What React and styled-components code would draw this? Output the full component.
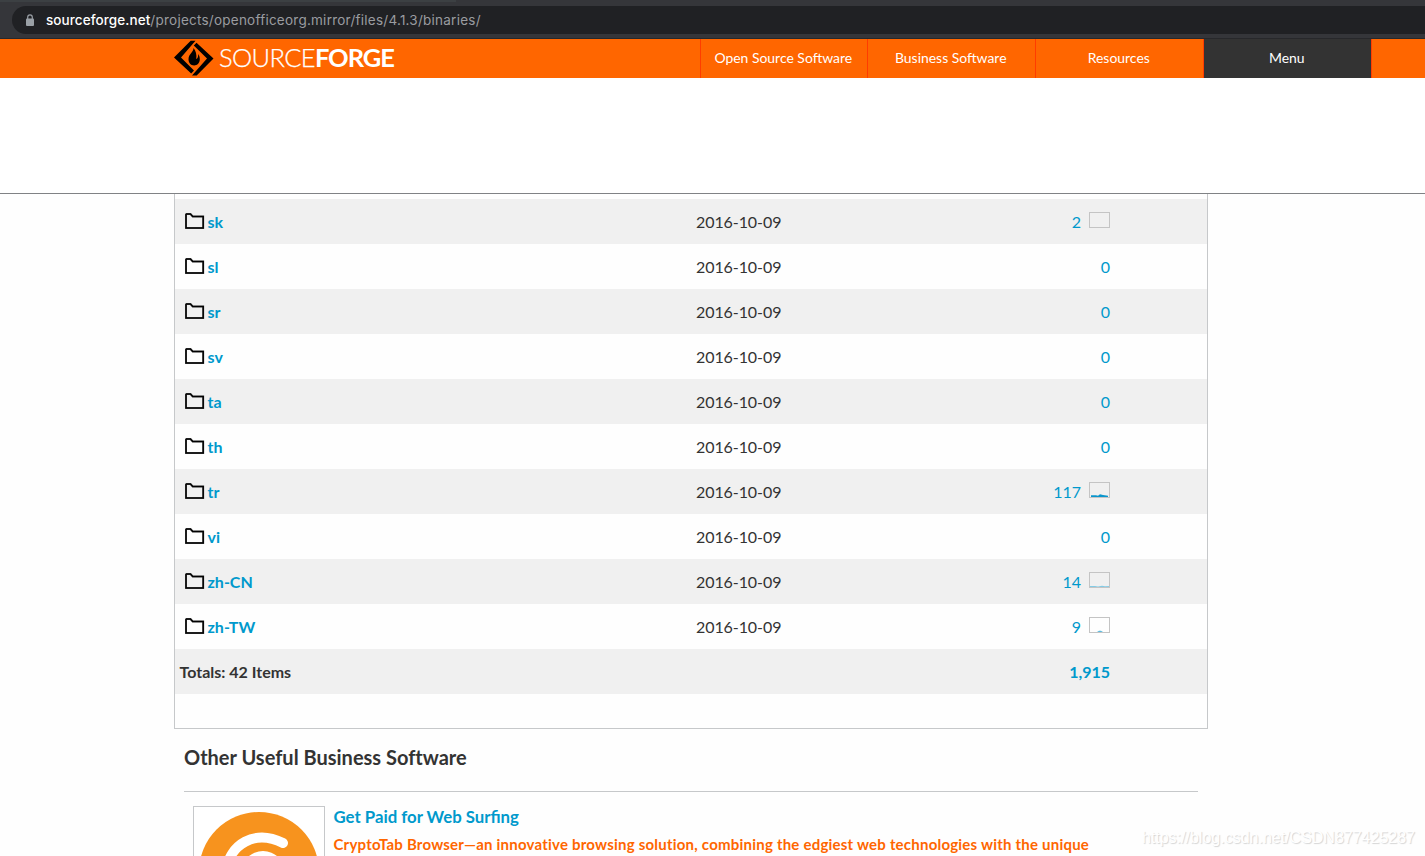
import React from "react";
import styled, { createGlobalStyle } from "styled-components";

const GlobalStyle = createGlobalStyle`
  * { box-sizing: border-box; }
  html, body { margin: 0; padding: 0; background: #fefefe; }
  body { font-family: Lato, sans-serif; color: #333; overflow: hidden; }
`;

const Page = styled.div`
  width: 1425px;
  height: 856px;
  overflow: hidden;
  position: relative;
`;

const BrowserBar = styled.div`
  height: 39px;
  background: #35363a;
  border-bottom: 1px solid #27282b;
  padding: 0 0 0 12px;
`;

const TabEdge = styled.div`
  height: 2px;
  width: 456px;
  margin: 0 0 4px -12px;
  background: #3c4043;
`;

const AddressField = styled.div`
  height: 28px;
  background: #202124;
  border-radius: 14px 0 0 14px;
  display: flex;
  align-items: center;
  padding-left: 13px;
  font: 13.5px/28px Inter, sans-serif;
  color: #9a9ca0;
  white-space: nowrap;
  svg { margin-right: 11px; }
`;

const Host = styled.span`
  color: #fff;
  font-weight: 500;
  letter-spacing: 0.08px;
`;

const UrlPath = styled.span`
  letter-spacing: 0.24px;
`;

const SiteHeader = styled.header`
  height: 39px;
  background: #f60;
  display: flex;
  padding-left: 174px;
`;

const Brand = styled.div`
  display: flex;
  width: 526px;
  align-items: center;
  padding-bottom: 2px;
  color: #fff;
  font-size: 25.5px;
  line-height: 39px;
  svg { flex: none; margin: 2px 5px 0 0; }
`;

const BrandLight = styled.span`
  font-weight: 300;
  letter-spacing: -0.65px;
  -webkit-text-stroke: 0.25px #fff;
`;

const BrandBold = styled.span`
  font-weight: 700;
  letter-spacing: -1.05px;
`;

const Nav = styled.nav`
  display: flex;
`;

const NavItem = styled.div`
  width: ${(p) => p.$width}px;
  padding-right: 1.5px;
  border-left: 1px solid #ff3c00;
  background: ${(p) => (p.$dark ? "#333" : "transparent")};
  color: #fff;
  font-size: 13.95px;
  line-height: 38px;
  text-align: center;
  white-space: nowrap;
`;

const NavEnd = styled.div`
  border-left: 1px solid #ff3c00;
`;

const AdSpace = styled.div`
  height: 116px;
  background: #fff;
  border-bottom: 1px solid #808285;
`;

const FileTable = styled.section`
  width: 1034px;
  height: 535px;
  margin-left: 174px;
  border: 1px solid #c6c8ca;
  border-top: 0;
  padding-top: 5px;
`;

const Row = styled.div`
  display: grid;
  grid-template-columns: 521px 314px 100px;
  height: 45px;
  line-height: 46px;
  font-size: 16px;
  background: ${(p) => (p.$shaded ? "#f0f0f0" : "#fefefe")};
`;

const Folder = styled.div`
  display: flex;
  padding-left: 10px;
  color: #09c;
  font-weight: 700;
  line-height: 45px;
  svg { flex: none; margin: 14px 2.5px 0 0; }
`;

const DateCell = styled.span`
  letter-spacing: -0.08px;
`;

const Downloads = styled.div`
  display: flex;
  justify-content: flex-end;
  color: #09c;
  font-weight: ${(p) => (p.$bold ? 700 : 400)};
`;

const SparkFrame = styled.span`
  width: 21px;
  height: 16px;
  border: 1px solid #c4c4c4;
  margin: 13px 0 0 8px;
  display: flex;
  svg { display: block; }
`;

const Totals = styled.div`
  grid-column: 1 / 3;
  padding-left: 4.5px;
  font-weight: 700;
`;

const Related = styled.section`
  width: 1014px;
  margin-left: 184px;
`;

const Heading = styled.h2`
  height: 63px;
  margin: 0;
  border-bottom: 1px solid #c6c8ca;
  font-size: 20px;
  line-height: 57px;
  font-weight: 700;
  font-variant-ligatures: none;
`;

const Product = styled.article`
  display: flex;
  padding: 14px 0 0 9px;
`;

const Thumb = styled.div`
  width: 132px;
  height: 132px;
  flex: none;
  border: 1px solid #c6c8ca;
  background: #fff;
`;

const ProductText = styled.div`
  padding: 0 0 0 8.5px;
  white-space: nowrap;
  font-weight: 700;
`;

const ProductName = styled.div`
  font-size: 16.8px;
  line-height: 22px;
  color: #09c;
`;

const Tagline = styled.div`
  margin-top: 5px;
  font-size: 15px;
  line-height: 22px;
  letter-spacing: 0.215px;
  color: #f60;
`;

const Watermark = styled.div`
  position: absolute;
  right: 10px;
  bottom: 8px;
  font: 16px/20px "Liberation Sans", sans-serif;
  color: #fff;
  text-shadow: 1px 1px 1px #d4d4d4;
`;

const LockIcon = () => (
  <svg width="10" height="13" viewBox="0 0 10 13">
    <rect x="1" y="4.5" width="8" height="7.5" rx="1" fill="#9aa0a6" />
    <path d="M2.7 5V3.2a2.3 2.3 0 0 1 4.6 0V5" fill="none" stroke="#9aa0a6" strokeWidth="1.2" />
  </svg>
);

const ForgeMark = () => (
  <svg width="40" height="37" viewBox="0 0 40 37">
    <path d="M16.7 .7h4.8L7 17.500l13 13-2.800 3L0 17.600z" fill="#000" />
    <path d="M22.500 2.700 39.500 18.500 22.700 35.500h-4.700L33 18.500 19.800 5.500z" fill="#000" />
    <path d="M19.500 8c.2 4-5 6-5 11.300 0 3.500 2.300 6.200 5.600 6.200s5.700-2.600 5.700-6.200c0-2.400-.8-4.200-1.600-5.200.1 3-.7 4.500-2 5 .8-4-.4-8.500-2.700-11.100z" fill="#000" />
  </svg>
);

const FolderIcon = () => (
  <svg width="20" height="18" viewBox="0 0 20 18">
    <path d="M1 15V1.500L1.500 1H5.500l2.200 2.500H18.200V15H1z" fill="none" stroke="#777" strokeWidth="2" />
    <path d="M1 15V1.500L1.500 1H5.500l2.200 2.500H18.200V15H1z" fill="none" stroke="#000" strokeWidth="1.500" />
  </svg>
);

const CoinLogo = () => (
  <svg width="130" height="130" viewBox="0 0 130 130">
    <circle cx="65" cy="65" r="60" fill="#f7931e" />
    <path d="M89 36C61 22 35 37 32 65c0 32 31 39 57 27" fill="none" stroke="#fff" strokeWidth="10" strokeLinecap="round" />
    <circle cx="69" cy="66" r="22" fill="#fff" />
  </svg>
);

const sparks = {
  none: null,
  busy: <path d="M1 12.300h5l2 .4 2-1.500 3 .8 5 .7V14H1z" fill="#0a96cd" />,
  low: <path d="M0 13h5l3 .5 4-.8 3 .6 4-.2V14H0z" fill="#84cbe5" />,
  dot: <path d="M7 14l2-1.200h2L13 14z" fill="#5dbbdf" />,
};

const Spark = ({ kind }) => (
  <SparkFrame>
    <svg width="19" height="14" viewBox="0 0 19 14">{sparks[kind]}</svg>
  </SparkFrame>
);

const folders = [
  { name: "sk", count: "2", spark: "none" },
  { name: "sl", count: "0" },
  { name: "sr", count: "0" },
  { name: "sv", count: "0" },
  { name: "ta", count: "0" },
  { name: "th", count: "0" },
  { name: "tr", count: "117", spark: "busy" },
  { name: "vi", count: "0" },
  { name: "zh-CN", count: "14", spark: "low" },
  { name: "zh-TW", count: "9", spark: "dot" },
];

export default function App() {
  return (
    <Page>
      <GlobalStyle />
      <BrowserBar>
        <TabEdge />
        <AddressField>
          <LockIcon />
          <Host>sourceforge.net</Host>
          <UrlPath>/projects/openofficeorg.mirror/files/4.1.3/binaries/</UrlPath>
        </AddressField>
      </BrowserBar>
      <SiteHeader>
        <Brand>
          <ForgeMark />
          <BrandLight>SOURCE</BrandLight>
          <BrandBold>FORGE</BrandBold>
        </Brand>
        <Nav>
          <NavItem $width={167}>Open Source Software</NavItem>
          <NavItem $width={168}>Business Software</NavItem>
          <NavItem $width={168}>Resources</NavItem>
          <NavItem $width={168} $dark>Menu</NavItem>
          <NavEnd />
        </Nav>
      </SiteHeader>
      <AdSpace />
      <FileTable>
        {folders.map((f, i) => (
          <Row key={f.name} $shaded={i % 2 === 0}>
            <Folder><FolderIcon />{f.name}</Folder>
            <DateCell>2016-10-09</DateCell>
            <Downloads>{f.count}{f.spark && <Spark kind={f.spark} />}</Downloads>
          </Row>
        ))}
        <Row $shaded>
          <Totals>Totals: 42 Items</Totals>
          <Downloads $bold>1,915</Downloads>
        </Row>
      </FileTable>
      <Related>
        <Heading>Other Useful Business Software</Heading>
        <Product>
          <Thumb><CoinLogo /></Thumb>
          <ProductText>
            <ProductName>Get Paid for Web Surfing</ProductName>
            <Tagline>CryptoTab Browser—an innovative browsing solution, combining the edgiest web technologies with the unique</Tagline>
          </ProductText>
        </Product>
      </Related>
      <Watermark>https://blog.csdn.net/CSDN877425287</Watermark>
    </Page>
  );
}
